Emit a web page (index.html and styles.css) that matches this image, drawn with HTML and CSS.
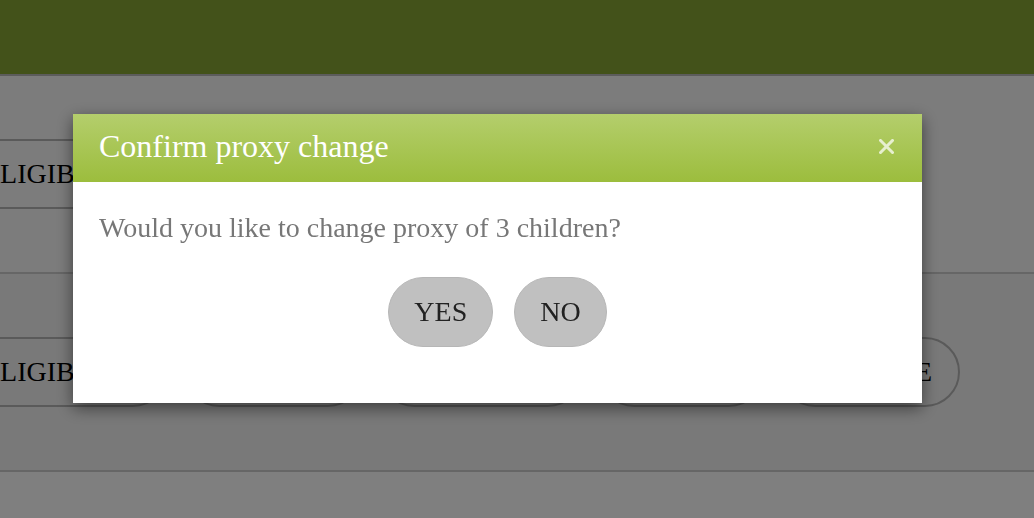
FILE: index.html
```html
<!DOCTYPE html>
<html lang="en">
<head>
<meta charset="utf-8">
<title>Confirm proxy change</title>
<link rel="stylesheet" href="styles.css">
</head>
<body>
<header class="topbar"></header>
<main class="list">
  <div class="row row-a">
    <div class="pills">
      <span class="pill pill-lead">ELIGIBLE</span>
      <span class="pill">PENDING</span>
      <span class="pill">APPROVED</span>
    </div>
  </div>
  <div class="row row-b">
    <div class="pills">
      <span class="pill pill-lead">ELIGIBLE</span>
      <span class="pill">PENDING</span>
      <span class="pill">APPROVED</span>
      <span class="pill">CLOSED</span>
      <span class="pill">ARCHIVE</span>
    </div>
  </div>
  <div class="row row-c">
    <div class="pills">
      <span class="pill pill-lead">ELIGIBLE</span>
      <span class="pill">PENDING</span>
    </div>
  </div>
</main>
<div class="overlay">
  <div class="modal" role="dialog" aria-labelledby="modal-title">
    <div class="modal-header">
      <h2 class="modal-title" id="modal-title">Confirm proxy change</h2>
      <span class="modal-close" aria-label="Close">
        <svg width="15" height="15" viewBox="0 0 15 15"><path d="M1.5 1.5 L13.5 13.5 M13.5 1.5 L1.5 13.5" stroke="currentColor" stroke-width="3" stroke-linecap="square" fill="none"/></svg>
      </span>
    </div>
    <div class="modal-body">
      <p class="modal-text">Would you like to change proxy of 3 children?</p>
      <div class="modal-actions">
        <button class="btn" type="button">YES</button>
        <button class="btn" type="button">NO</button>
      </div>
    </div>
  </div>
</div>
</body>
</html>
```
FILE: styles.css
```css
html, body {
  margin: 0;
  padding: 0;
}
body {
  width: 1034px;
  height: 518px;
  overflow: hidden;
  background: #ffffff;
  font-family: "Liberation Serif", "Times New Roman", serif;
  color: #000;
}
.topbar {
  height: 74px;
  background: #86a434;
  border-bottom: 2px solid #b8b8b8;
}
.list {
  display: flex;
  flex-direction: column;
}
.row {
  padding: 63px 0;
  border-bottom: 2px solid #cccccc;
}
.row-a { background: #f8f8f8; }
.row-b { background: #f2f2f2; }
.row-c { background: #ffffff; }
.pills {
  display: flex;
  gap: 16px;
  margin-left: -45px;
  white-space: nowrap;
}
.pill {
  flex: none;
  display: block;
  font-size: 28px;
  line-height: 32px;
  padding: 17px 26px;
  border: 2px solid #b4b4b4;
  border-radius: 35px;
  color: #000;
}
.pill-lead {
  padding-right: 57px;
}
.overlay {
  position: fixed;
  inset: 0;
  background: rgba(0, 0, 0, 0.5);
}
.modal {
  position: absolute;
  left: 73px;
  top: 114px;
  width: 849px;
  background: #ffffff;
  box-shadow: 0 5px 15px rgba(0, 0, 0, 0.5);
}
.modal-header {
  height: 68px;
  box-sizing: border-box;
  display: flex;
  align-items: center;
  justify-content: space-between;
  padding: 0 28px 3px 26px;
  background: linear-gradient(#b4ce6c, #9cbd3d);
}
.modal-title {
  margin: 0;
  font-size: 32px;
  font-weight: normal;
  line-height: normal;
  color: #ffffff;
}
.modal-close {
  display: flex;
  color: rgba(255, 255, 255, 0.72);
}
.modal-body {
  padding: 30px 26px 56px;
}
.modal-text {
  margin: 0;
  font-size: 28px;
  line-height: 32px;
  color: #777777;
}
.modal-actions {
  margin-top: 33px;
  display: flex;
  justify-content: center;
  gap: 21px;
}
.btn {
  font-family: "Liberation Serif", "Times New Roman", serif;
  font-size: 28px;
  line-height: 32px;
  padding: 18px 25px;
  border: 1px solid #b6b6b6;
  border-radius: 35px;
  background: #c0c0c0;
  color: #222222;
  margin: 0;
  cursor: pointer;
}
```
